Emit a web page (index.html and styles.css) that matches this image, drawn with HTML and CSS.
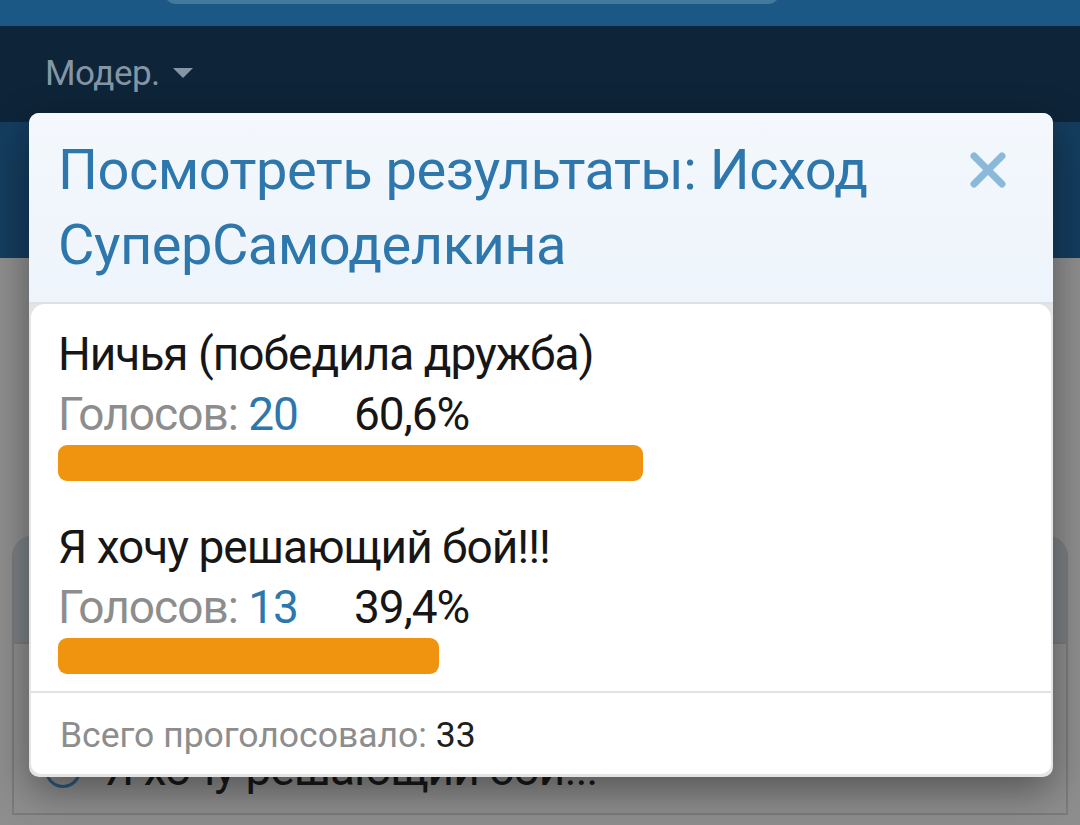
FILE: index.html
```html
<!DOCTYPE html>
<html lang="ru">
<head>
<meta charset="utf-8">
<title>Результаты опроса</title>
<link rel="stylesheet" href="styles.css">
</head>
<body>
<div class="page">
  <header class="topbar"><div class="search"></div></header>
  <nav class="navbar"><span class="nav-item">Модер.<span class="caret"></span></span></nav>
  <div class="band"></div>
  <main class="content">
    <div class="card">
      <div class="card-head"></div>
      <div class="card-row"><span class="radio"></span><span class="row-text">Я хочу решающий бой!!!</span></div>
    </div>
  </main>

  <section class="modal">
    <div class="modal-head">
      <h1 class="modal-title">Посмотреть результаты: Исход СуперСамоделкина</h1>
      <svg class="close" width="36" height="36" viewBox="0 0 36 36"><path d="M4 4 L32 32 M32 4 L4 32" stroke="#8ab9da" stroke-width="7" stroke-linecap="round"/></svg>
    </div>
    <div class="modal-body">
      <div class="answer">
        <div class="answer-text">Ничья (победила дружба)</div>
        <div class="answer-stats"><span class="votes-label">Голосов: <span class="votes-num">20</span></span><span class="percent">60,6%</span></div>
        <div class="bar-track"><div class="bar" style="width:60.6%"></div></div>
      </div>
      <div class="answer">
        <div class="answer-text">Я хочу решающий бой!!!</div>
        <div class="answer-stats"><span class="votes-label">Голосов: <span class="votes-num">13</span></span><span class="percent">39,4%</span></div>
        <div class="bar-track"><div class="bar" style="width:39.4%"></div></div>
      </div>
    </div>
    <footer class="modal-foot"><span class="total-label">Всего проголосовало:</span> <span class="total-num">33</span></footer>
  </section>
</div>
</body>
</html>
```
FILE: styles.css
```css
html, body {
  margin: 0;
  padding: 0;
}
body {
  width: 1080px;
  height: 825px;
  overflow: hidden;
  background: #8e8e8e;
  font-family: Roboto, "Noto Sans", sans-serif;
}
.page {
  position: relative;
  width: 1080px;
  height: 825px;
}
.topbar {
  height: 26px;
  background: #1b5885;
  overflow: hidden;
}
.search {
  margin-left: 164px;
  width: 616px;
  height: 24px;
  margin-top: -20px;
  background: #44799f;
  border-radius: 16px;
}
.navbar {
  height: 96px;
  background: #0e2438;
  display: flex;
  align-items: center;
  padding-left: 45px;
  box-sizing: border-box;
}
.nav-item {
  color: #8496a6;
  font-size: 35px;
  letter-spacing: -0.5px;
  display: flex;
  align-items: center;
  gap: 13px;
  padding-bottom: 2px;
}
.caret {
  width: 0;
  height: 0;
  border-left: 10px solid transparent;
  border-right: 10px solid transparent;
  border-top: 10px solid #8496a6;
}
.band {
  height: 136px;
  background: #143d5e;
}
.content {
  padding: 277px 12px 0 12px;
}
.card {
  border-radius: 22px 22px 0 0;
  border-left: 2px solid #7b7b7b;
  border-right: 2px solid #7b7b7b;
  overflow: hidden;
}
.card-head {
  height: 107px;
  background: #7b8086;
  border-bottom: 2px solid #7a7a7a;
}
.card-row {
  height: 171px;
  box-sizing: border-box;
  border-bottom: 2px solid #7b7b7b;
  display: flex;
  align-items: flex-start;
  gap: 24px;
  padding: 95px 0 0 31px;
}
.radio {
  width: 30px;
  height: 30px;
  margin-top: 13px;
  border: 3px solid #2b5b80;
  border-radius: 50%;
  flex: none;
}
.row-text {
  font-size: 46px;
  line-height: 60px;
  letter-spacing: -1px;
  color: #181818;
}

/* Modal */
.modal {
  position: absolute;
  left: 29px;
  top: 113px;
  width: 1024px;
  height: 664px;
  box-sizing: border-box;
  background: #e4e4e4;
  border-radius: 10px;
  padding: 0 2px 3px 2px;
  display: flex;
  flex-direction: column;
  box-shadow: 0 14px 40px rgba(0, 0, 0, 0.4);
}
.modal-head {
  position: relative;
  background: linear-gradient(#f4f8fd, #edf4fb);
  border-radius: 10px 10px 0 0;
  border-bottom: 2px solid #dde1e5;
  padding: 20px 150px 19px 29px;
  margin: 0 -2px;
}
.modal-title {
  margin: 0;
  font-weight: 400;
  font-size: 56px;
  line-height: 75px;
  letter-spacing: -0.5px;
  color: #2e77ad;
}
.close {
  position: absolute;
  right: 47px;
  top: 39px;
}
.modal-body {
  background: #ffffff;
  border-radius: 14px 14px 0 0;
  padding: 20px 27px 17px 27px;
  flex: 1;
}
.answer + .answer {
  margin-top: 36px;
}
.answer-text {
  font-size: 46px;
  line-height: 60px;
  letter-spacing: -1px;
  color: #161616;
}
.answer-stats {
  font-size: 46px;
  line-height: 60px;
  letter-spacing: -1px;
  display: flex;
  gap: 56px;
}
.votes-label {
  color: #8d8d8d;
}
.votes-num {
  color: #2e77ad;
}
.percent {
  color: #161616;
}
.bar-track {
  margin-top: 1px;
  height: 36px;
  width: 966px;
}
.bar {
  height: 100%;
  background: #f0930f;
  border-radius: 9px;
}
.modal-foot {
  background: #ffffff;
  border-top: 2px solid #e2e2e2;
  border-radius: 0 0 10px 10px;
  padding: 22px 29px 0 29px;
  height: 85px;
  box-sizing: border-box;
  font-size: 35.5px;
  line-height: 40px;
}
.total-label {
  color: #8d8d8d;
}
.total-num {
  color: #1e1e1e;
}
```
